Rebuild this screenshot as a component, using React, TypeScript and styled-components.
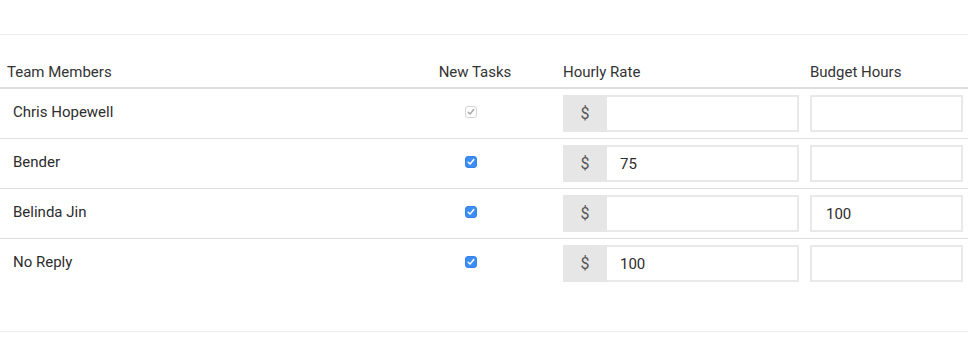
import React from "react";
import styled, { createGlobalStyle } from "styled-components";

const GlobalStyle = createGlobalStyle`
  body {
    margin: 0;
    background: #ffffff;
    font-family: Roboto, "Liberation Sans", sans-serif;
    color: #333333;
  }
`;

const Page = styled.div`
  width: 980px;
  height: 348px;
  padding-top: 34px;
  box-sizing: border-box;
`;

const Divider = styled.div<{ $gap?: number }>`
  width: 968px;
  height: 1px;
  background: #ececec;
  margin-top: ${(p) => p.$gap || 0}px;
`;

const Table = styled.div`
  width: 968px;
  margin-top: 19px;
`;

const Row = styled.div<{ $header?: boolean; $last?: boolean }>`
  display: grid;
  grid-template-columns: 430px 90px 279px 169px;
  align-items: center;
  height: ${(p) => (p.$header ? 33 : 49)}px;
  border-bottom: ${(p) =>
    p.$header ? "2px solid #dddddd" : p.$last ? "none" : "1px solid #dddddd"};
`;

const HeadCell = styled.div<{ $center?: boolean; $pad?: number }>`
  font-size: 15px;
  line-height: 20px;
  color: #333333;
  text-align: ${(p) => (p.$center ? "center" : "left")};
  padding-left: ${(p) => p.$pad || 0}px;
  padding-top: 2px;
`;

const NameCell = styled.div`
  font-size: 15px;
  line-height: 20px;
  color: #2d2d2d;
  padding-left: 13px;
  padding-bottom: 3px;
`;

const CheckCell = styled.div`
  display: flex;
  justify-content: center;
  padding-right: 8px;
  padding-bottom: 3px;
`;

const Box = styled.span<{ $disabled?: boolean }>`
  width: 12px;
  height: 12px;
  box-sizing: border-box;
  border-radius: 3px;
  display: flex;
  align-items: center;
  justify-content: center;
  background: ${(p) => (p.$disabled ? "#ffffff" : "#3b8ef5")};
  border: 1px solid ${(p) => (p.$disabled ? "#d4d4d4" : "#3381ea")};
`;

const RateCell = styled.div`
  padding-left: 43px;
  display: flex;
`;

const BudgetCell = styled.div`
  padding-left: 11px;
  padding-right: 5px;
`;

const Addon = styled.div`
  width: 44px;
  height: 37px;
  background: #e6e6e6;
  color: #555555;
  font-size: 16px;
  display: flex;
  align-items: center;
  justify-content: center;
`;

const Field = styled.div<{ $width: number; $pad: number }>`
  width: ${(p) => p.$width}px;
  height: 37px;
  box-sizing: border-box;
  border: 2px solid #e9e9e9;
  border-left: ${(p) => (p.$pad < 14 ? "none" : "2px solid #e9e9e9")};
  padding-left: ${(p) => p.$pad}px;
  font-size: 15px;
  color: #2d2d2d;
  display: flex;
  align-items: center;
`;

const Check: React.FC<{ disabled?: boolean }> = ({ disabled }) => (
  <Box $disabled={disabled}>
    <svg width="8" height="8" viewBox="0 0 8 8">
      <path
        d="M1.2 4.2 L3.1 6 L6.8 1.6"
        fill="none"
        stroke={disabled ? "#a8a8a8" : "#ffffff"}
        strokeWidth="1.5"
        strokeLinecap="round"
        strokeLinejoin="round"
      />
    </svg>
  </Box>
);

const members = [
  { name: "Chris Hopewell", disabled: true, rate: "", budget: "" },
  { name: "Bender", disabled: false, rate: "75", budget: "" },
  { name: "Belinda Jin", disabled: false, rate: "", budget: "100" },
  { name: "No Reply", disabled: false, rate: "100", budget: "" },
];

export default function App() {
  return (
    <Page>
      <GlobalStyle />
      <Divider />
      <Table>
        <Row $header>
          <HeadCell $pad={7}>Team Members</HeadCell>
          <HeadCell $center>New Tasks</HeadCell>
          <HeadCell $pad={43}>Hourly Rate</HeadCell>
          <HeadCell $pad={11}>Budget Hours</HeadCell>
        </Row>
        {members.map((m, i) => (
          <Row key={m.name} $last={i === members.length - 1}>
            <NameCell>{m.name}</NameCell>
            <CheckCell>
              <Check disabled={m.disabled} />
            </CheckCell>
            <RateCell>
              <Addon>$</Addon>
              <Field $width={192} $pad={13}>
                {m.rate}
              </Field>
            </RateCell>
            <BudgetCell>
              <Field $width={153} $pad={14}>
                {m.budget}
              </Field>
            </BudgetCell>
          </Row>
        ))}
      </Table>
      <Divider $gap={43} />
    </Page>
  );
}
